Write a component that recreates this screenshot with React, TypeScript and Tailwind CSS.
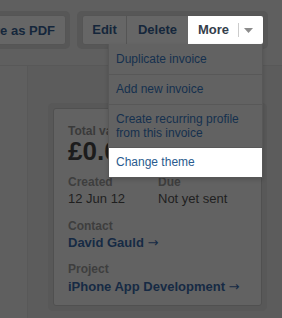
import React from "react";

const MENU = [
  { label: "Duplicate invoice" },
  { label: "Add new invoice" },
  { label: "Create recurring profile from this invoice", multi: true },
  { label: "Change theme", active: true },
];

function Caret() {
  return (
    <svg width="9" height="5" viewBox="0 0 9 5">
      <path d="M0 0h9L4.5 5z" fill="#8c8c8c" />
    </svg>
  );
}

function Arrow() {
  return (
    <span className="font-normal" style={{ fontFamily: '"DejaVu Sans", sans-serif' }}>
      →
    </span>
  );
}

export default function App() {
  return (
    <div
      className="relative w-[282px] h-[318px] overflow-hidden bg-[#5c5c5c] text-[13px]"
      style={{ fontFamily: '"Liberation Sans", Arial, Helvetica, sans-serif' }}
    >
      {/* Toolbar */}
      <header className="h-[66px] bg-[#5f5f5f] border-b border-[#585858] pt-[11px]">
        <div className="flex gap-[7px] ml-[-38px]">
          <div className="flex p-[4px] rounded-[5px] bg-[#575757]">
            <button className="h-[30px] w-[100px] rounded-[3px] bg-[#666666] border border-[#555555] font-bold text-[#15263b] leading-none">
              Save as PDF
            </button>
          </div>
          <div className="flex p-[4px] pl-[5px] rounded-[5px] bg-[#575757]">
            <div className="flex h-[30px] rounded-[3px] overflow-hidden border border-[#555555]">
              <button className="w-[44px] bg-[#666666] font-bold text-[#15263b] border-r border-[#555555]">
                Edit
              </button>
              <button className="w-[61px] bg-[#666666] font-bold text-[#15263b]">Delete</button>
              <button className="w-[75px] bg-white flex items-center pl-[10px]">
                <span className="font-bold text-[#343e4b]">More</span>
                <span className="ml-[9px] w-px h-[14px] bg-[#cccccc]" />
                <span className="ml-[5px] flex items-center">
                  <Caret />
                </span>
              </button>
            </div>
          </div>
        </div>
      </header>

      {/* Body */}
      <div className="flex h-[252px]">
        <div className="w-[28px] shrink-0 bg-[#5f5f5f] border-r border-[#585858]" />
        <div className="pl-[20px] pt-[37px]">
          <div className="w-[219px] p-[5px] rounded-[5px] bg-[#585858]">
            <div className="rounded-[3px] border border-[#505050] bg-[#626262] pt-[15px] pl-[14px] pb-[10px]">
              <div className="text-[12px] leading-[14px] font-bold text-[#3a3a3a]">Total value</div>
              <div className="text-[26px] leading-[26px] font-bold text-[#1c1c1c]">£0.00</div>
              <div className="grid grid-cols-[90px_1fr] mt-[10px]">
                <div className="text-[12px] leading-[16px] font-bold text-[#3e3e3e]">Created</div>
                <div className="text-[12px] leading-[16px] font-bold text-[#3e3e3e]">Due</div>
                <div className="leading-[16px] mt-px text-[#1f1f1f]">12 Jun 12</div>
                <div className="leading-[16px] mt-px text-[#1f1f1f]">Not yet sent</div>
              </div>
              <div className="mt-[11px] text-[12px] leading-[16px] font-bold text-[#3e3e3e]">Contact</div>
              <div className="mt-px leading-[16px] font-bold text-[#162a44]">
                David Gauld <Arrow />
              </div>
              <div className="mt-[10px] text-[12px] leading-[16px] font-bold text-[#3e3e3e]">Project</div>
              <div className="mt-[2px] leading-[16px] font-bold text-[#162a44]">
                iPhone App Development <Arrow />
              </div>
            </div>
          </div>
        </div>
      </div>

      {/* Dropdown menu */}
      <ul className="absolute left-[108px] top-[44px] w-[155px] bg-[#626262] border border-[#575757] border-t-0 shadow-[0_2px_4px_rgba(0,0,0,0.15)]">
        {MENU.map((item, i) => (
          <li
            key={item.label}
            className={`px-[7px] py-[7px] text-[12px] ${item.multi ? "leading-[14px]" : "leading-[15px]"} ${
              i > 0 ? "border-t border-[#585858]" : "pt-[8px]"
            } ${item.active ? "bg-white text-[#2a5b8e]" : "text-[#15304e]"}`}
          >
            {item.label}
          </li>
        ))}
      </ul>
    </div>
  );
}
